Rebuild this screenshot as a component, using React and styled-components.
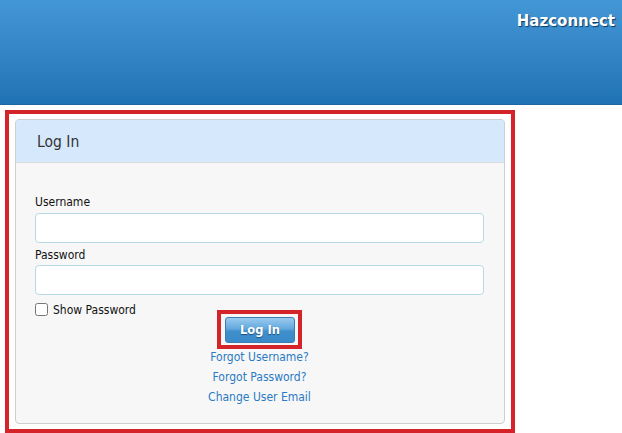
import React from "react";
import styled, { createGlobalStyle } from "styled-components";

const Global = createGlobalStyle`
  html, body { margin: 0; padding: 0; background: #ffffff; }
  body { font-family: "DejaVu Sans Condensed", "DejaVu Sans", sans-serif; color: #222; }
  * { box-sizing: border-box; }
`;

const Header = styled.header`
  height: 105px;
  background: linear-gradient(to bottom, #4497d5 0%, #3385c6 50%, #1f72b3 100%);
  border-bottom: 1px solid #1d68a3;
  display: flex;
  justify-content: flex-end;
  align-items: flex-start;
  padding: 11px 7px 0 0;
`;

const Brand = styled.div`
  color: #ffffff;
  font-family: "DejaVu Sans", sans-serif;
  font-weight: bold;
  font-size: 15px;
  line-height: 20px;
  text-shadow: 1px 1px 1px #0b3a66;
`;

const Main = styled.main`
  padding: 5px 0 0 5px;
`;

const Frame = styled.div`
  width: 510px;
  border: 4px solid #d5232a;
  padding: 5px 6px 5px 6px;
`;

const Panel = styled.section`
  background: #f7f7f7;
  border: 1px solid #cfcfcf;
  border-radius: 4px;
  overflow: hidden;
`;

const PanelHeading = styled.div`
  height: 43px;
  background: #d6e8fc;
  border-bottom: 1px solid #dcdcdc;
  padding: 2px 0 0 21px;
  display: flex;
  align-items: center;
  font-size: 15.5px;
  color: #333;
`;

const PanelBody = styled.div`
  padding: 32px 20px 16px 19px;
  display: flex;
  flex-direction: column;
`;

const Label = styled.label`
  display: block;
  font-size: 12px;
  line-height: 15px;
  margin-top: ${(p) => p.$top || 0}px;
  margin-bottom: ${(p) => p.$bottom || 0}px;
  color: #111;
`;

const Input = styled.input`
  display: block;
  width: 100%;
  height: 30px;
  border: 1px solid #b8d8e6;
  border-radius: 4px;
  background: #fff;
  padding: 0 6px;
  font-size: 12px;
  outline: none;
`;

const CheckRow = styled.label`
  display: flex;
  align-items: center;
  gap: 5px;
  height: 13px;
  margin-top: 8px;
  font-size: 12px;
  color: #111;
`;

const Check = styled.input`
  width: 13px;
  height: 13px;
  margin: 0;
`;

const Actions = styled.div`
  display: flex;
  flex-direction: column;
  align-items: center;
  margin-top: -6px;
`;

const Highlight = styled.div`
  border: 4px solid #d5232a;
  padding: 3px 3px 2px 4px;
  display: flex;
`;

const Button = styled.button`
  width: 70px;
  height: 26px;
  border: 1px solid #3b7db3;
  border-radius: 3px;
  background: linear-gradient(to bottom, #9acbee 0%, #62a8de 45%, #3f8fcd 55%, #3a89c8 100%);
  color: #fff;
  font-family: "DejaVu Sans", sans-serif;
  font-weight: bold;
  font-size: 11.5px;
  text-shadow: 0 1px 1px #1d4f7a;
  cursor: pointer;
  padding: 0;
`;

const Links = styled.div`
  margin-top: -2px;
  display: flex;
  flex-direction: column;
  align-items: center;
`;

const Link = styled.a`
  font-size: 12px;
  line-height: 20px;
  color: #2a7ac4;
  text-decoration: none;
`;

export default function App() {
  return (
    <>
      <Global />
      <Header>
        <Brand>Hazconnect</Brand>
      </Header>
      <Main>
        <Frame>
          <Panel>
            <PanelHeading>Log In</PanelHeading>
            <PanelBody>
              <Label htmlFor="u" $bottom={3}>Username</Label>
              <Input id="u" type="text" />
              <Label htmlFor="p" $top={5} $bottom={2}>Password</Label>
              <Input id="p" type="password" />
              <CheckRow>
                <Check type="checkbox" />
                Show Password
              </CheckRow>
              <Actions>
                <Highlight>
                  <Button type="button">Log In</Button>
                </Highlight>
                <Links>
                  <Link href="#">Forgot Username?</Link>
                  <Link href="#">Forgot Password?</Link>
                  <Link href="#">Change User Email</Link>
                </Links>
              </Actions>
            </PanelBody>
          </Panel>
        </Frame>
      </Main>
    </>
  );
}
